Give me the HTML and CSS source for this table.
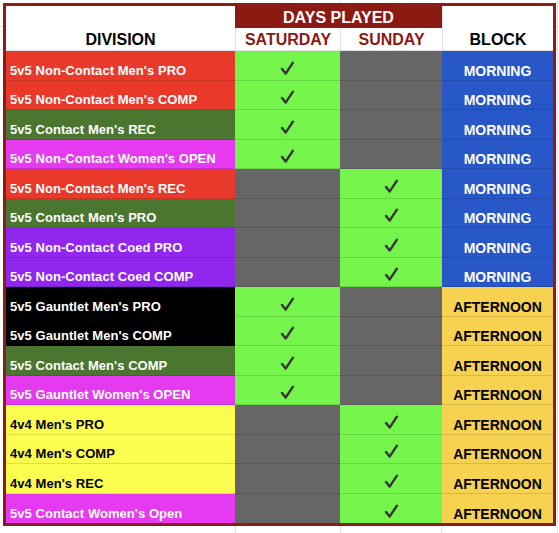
FILE: index.html
```html
<!DOCTYPE html>
<html lang="en">
<head>
<meta charset="utf-8">
<title>Days Played</title>
<link rel="stylesheet" href="styles.css">
</head>
<body>
<div class="sheet">
  <div class="grid">
    <div class="h-div">DIVISION</div>
    <div class="h-days">DAYS PLAYED</div>
    <div class="h-block">BLOCK</div>
    <div class="h-day">SATURDAY</div>
    <div class="h-day">SUNDAY</div>

    <div class="c name red">5v5 Non-Contact Men's PRO</div>
    <div class="c chk on"><svg viewBox="0 0 16 16"><polyline points="2.2,8.6 6,13.4 13.8,1.8"/></svg></div>
    <div class="c chk off"></div>
    <div class="c blk am">MORNING</div>

    <div class="c name red">5v5 Non-Contact Men's COMP</div>
    <div class="c chk on"><svg viewBox="0 0 16 16"><polyline points="2.2,8.6 6,13.4 13.8,1.8"/></svg></div>
    <div class="c chk off"></div>
    <div class="c blk am">MORNING</div>

    <div class="c name green">5v5 Contact Men's REC</div>
    <div class="c chk on"><svg viewBox="0 0 16 16"><polyline points="2.2,8.6 6,13.4 13.8,1.8"/></svg></div>
    <div class="c chk off"></div>
    <div class="c blk am">MORNING</div>

    <div class="c name magenta">5v5 Non-Contact Women's OPEN</div>
    <div class="c chk on"><svg viewBox="0 0 16 16"><polyline points="2.2,8.6 6,13.4 13.8,1.8"/></svg></div>
    <div class="c chk off"></div>
    <div class="c blk am">MORNING</div>

    <div class="c name red">5v5 Non-Contact Men's REC</div>
    <div class="c chk off"></div>
    <div class="c chk on"><svg viewBox="0 0 16 16"><polyline points="2.2,8.6 6,13.4 13.8,1.8"/></svg></div>
    <div class="c blk am">MORNING</div>

    <div class="c name green">5v5 Contact Men's PRO</div>
    <div class="c chk off"></div>
    <div class="c chk on"><svg viewBox="0 0 16 16"><polyline points="2.2,8.6 6,13.4 13.8,1.8"/></svg></div>
    <div class="c blk am">MORNING</div>

    <div class="c name purple">5v5 Non-Contact Coed PRO</div>
    <div class="c chk off"></div>
    <div class="c chk on"><svg viewBox="0 0 16 16"><polyline points="2.2,8.6 6,13.4 13.8,1.8"/></svg></div>
    <div class="c blk am">MORNING</div>

    <div class="c name purple">5v5 Non-Contact Coed COMP</div>
    <div class="c chk off"></div>
    <div class="c chk on"><svg viewBox="0 0 16 16"><polyline points="2.2,8.6 6,13.4 13.8,1.8"/></svg></div>
    <div class="c blk am">MORNING</div>

    <div class="c name black">5v5 Gauntlet Men's PRO</div>
    <div class="c chk on"><svg viewBox="0 0 16 16"><polyline points="2.2,8.6 6,13.4 13.8,1.8"/></svg></div>
    <div class="c chk off"></div>
    <div class="c blk pm">AFTERNOON</div>

    <div class="c name black">5v5 Gauntlet Men's COMP</div>
    <div class="c chk on"><svg viewBox="0 0 16 16"><polyline points="2.2,8.6 6,13.4 13.8,1.8"/></svg></div>
    <div class="c chk off"></div>
    <div class="c blk pm">AFTERNOON</div>

    <div class="c name green">5v5 Contact Men's COMP</div>
    <div class="c chk on"><svg viewBox="0 0 16 16"><polyline points="2.2,8.6 6,13.4 13.8,1.8"/></svg></div>
    <div class="c chk off"></div>
    <div class="c blk pm">AFTERNOON</div>

    <div class="c name magenta">5v5 Gauntlet Women's OPEN</div>
    <div class="c chk on"><svg viewBox="0 0 16 16"><polyline points="2.2,8.6 6,13.4 13.8,1.8"/></svg></div>
    <div class="c chk off"></div>
    <div class="c blk pm">AFTERNOON</div>

    <div class="c name yellow">4v4 Men's PRO</div>
    <div class="c chk off"></div>
    <div class="c chk on"><svg viewBox="0 0 16 16"><polyline points="2.2,8.6 6,13.4 13.8,1.8"/></svg></div>
    <div class="c blk pm">AFTERNOON</div>

    <div class="c name yellow">4v4 Men's COMP</div>
    <div class="c chk off"></div>
    <div class="c chk on"><svg viewBox="0 0 16 16"><polyline points="2.2,8.6 6,13.4 13.8,1.8"/></svg></div>
    <div class="c blk pm">AFTERNOON</div>

    <div class="c name yellow">4v4 Men's REC</div>
    <div class="c chk off"></div>
    <div class="c chk on"><svg viewBox="0 0 16 16"><polyline points="2.2,8.6 6,13.4 13.8,1.8"/></svg></div>
    <div class="c blk pm">AFTERNOON</div>

    <div class="c name magenta last">5v5 Contact Women's Open</div>
    <div class="c chk off last"></div>
    <div class="c chk on last"><svg viewBox="0 0 16 16"><polyline points="2.2,8.6 6,13.4 13.8,1.8"/></svg></div>
    <div class="c blk pm last">AFTERNOON</div>
  </div>
</div>
</body>
</html>
```

FILE: styles.css
```css
html {
  background-color: #ffffff;
  background-image:
    linear-gradient(#e2e2e2, #e2e2e2),
    linear-gradient(#e2e2e2, #e2e2e2),
    linear-gradient(#e2e2e2, #e2e2e2),
    linear-gradient(#e2e2e2, #e2e2e2),
    linear-gradient(#e2e2e2, #e2e2e2),
    linear-gradient(#e2e2e2, #e2e2e2);
  background-size: 1px 100%, 1px 100%, 1px 100%, 1px 100%, 100% 1px, 100% 1px;
  background-position: 235px 0, 340px 0, 441px 0, 557px 0, 0 26px, 0 49px;
  background-repeat: no-repeat;
  height: 100%;
}

body {
  margin: 0;
  font-family: "Liberation Sans", Arial, sans-serif;
  font-weight: bold;
}

.sheet {
  margin: 3px 0 0 3px;
  width: 547px;
  border: 3px solid #8d1b16;
  background: #ffffff;
}

.grid {
  display: grid;
  grid-template-columns: 229px 105px 102px 111px;
  grid-template-rows: 22px 23px repeat(16, 29.5px);
}

.h-div,
.h-block {
  grid-row: 1 / 3;
  display: flex;
  align-items: flex-end;
  justify-content: center;
  font-size: 16px;
  color: #000000;
  padding-bottom: 1px;
  border-bottom: 1px solid #e0e0e0;
  box-sizing: border-box;
}

.h-div {
  grid-column: 1;
}

.h-block {
  grid-column: 4;
  border-left: 1px solid #e0e0e0;
}

.h-days {
  grid-column: 2 / 4;
  grid-row: 1;
  background: #8b1a13;
  color: #ffffff;
  font-size: 16px;
  display: flex;
  align-items: flex-end;
  justify-content: center;
  padding-bottom: 1px;
  box-sizing: border-box;
  margin-top: -3px;
}

.h-day {
  grid-row: 2;
  display: flex;
  align-items: flex-end;
  justify-content: center;
  font-size: 16px;
  color: #8b1a13;
  border-left: 1px solid #e0e0e0;
  border-bottom: 1px solid #e0e0e0;
  padding-bottom: 1px;
  box-sizing: border-box;
}

.c {
  display: flex;
  align-items: flex-end;
  box-sizing: border-box;
  border-bottom: 1px solid rgba(0, 0, 0, 0.12);
  white-space: nowrap;
}

.c.last {
  border-bottom: none;
}

.name {
  padding: 0 0 2px 4px;
  font-size: 13px;
  letter-spacing: 0.05px;
  color: #ffffff;
}

.chk {
  justify-content: center;
  padding-bottom: 4px;
}

.chk svg {
  width: 15px;
  height: 15px;
  display: block;
}

.chk polyline {
  fill: none;
  stroke: #363636;
  stroke-width: 2.6;
  stroke-linecap: round;
  stroke-linejoin: round;
}

.blk {
  justify-content: center;
  font-size: 14px;
  padding-bottom: 1px;
}

.red { background: #e8392a; }
.green { background: #4b7630; }
.magenta { background: #e63af1; }
.purple { background: #9126ef; }
.black { background: #000000; }
.yellow { background: #fdfd50; color: #000000; }

.on { background: #75f54c; }
.off { background: #666666; }

.am { background: #2857c7; color: #ffffff; }
.pm { background: #f6d250; color: #000000; }
```
